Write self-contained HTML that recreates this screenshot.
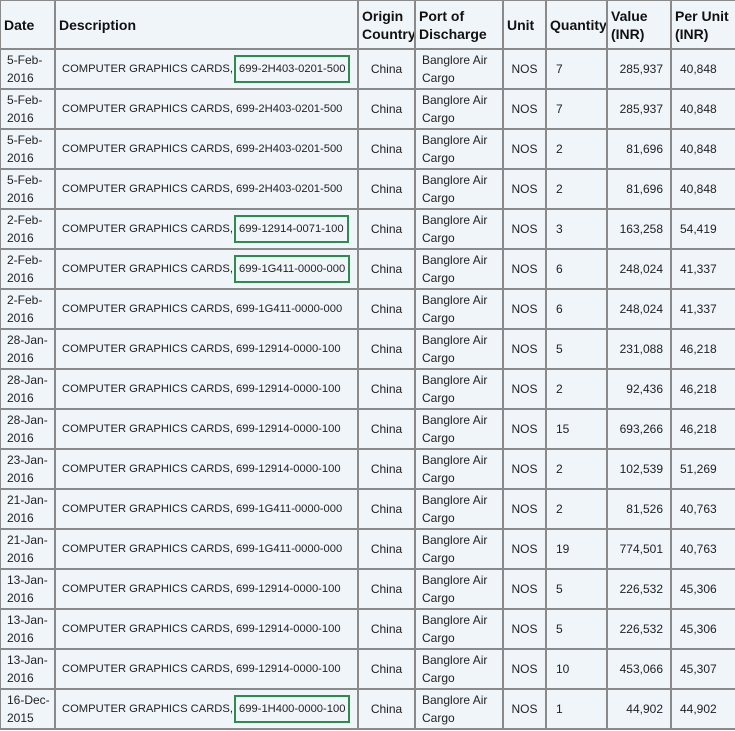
<!DOCTYPE html>
<html><head><meta charset="utf-8"><style>
body{margin:0;background:#fff;font-family:"Liberation Sans",sans-serif;}
table{border-collapse:collapse;table-layout:fixed;width:736px;margin:-1px 0 0 -1px;}
td,th{border:2px solid #8a8a8a;background:#f0f5fa;font-size:12px;color:#222;height:38px;padding:0 6px;line-height:18px;vertical-align:middle;text-align:left;font-weight:normal;overflow:hidden;white-space:nowrap}
th{font-weight:bold;font-size:14px;height:47px;color:#111;padding:0 3px}
td.d{padding:0 6px}
td.desc{padding-left:6px;font-size:11.2px;overflow:visible}
td.c{text-align:center}
td.r{text-align:right;padding-right:7px}
td.q{padding-left:9px}
td.p{padding-left:8px}
td.port{padding-left:6px}
.g{border:2px solid #2e8b4e;padding:6px 3px;margin-left:-2px}
</style></head><body>
<table>
<colgroup><col style="width:55px"><col style="width:303px"><col style="width:57px"><col style="width:88px"><col style="width:43px"><col style="width:61px"><col style="width:64px"><col style="width:65px"></colgroup>
<tr><th>Date</th><th>Description</th><th>Origin<br>Country</th><th>Port of<br>Discharge</th><th>Unit</th><th>Quantity</th><th>Value<br>(INR)</th><th>Per Unit<br>(INR)</th></tr>
<tr><td class="d">5-Feb-<br>2016</td><td class="desc">COMPUTER GRAPHICS CARDS, <span class="g">699-2H403-0201-500</span></td><td class="c">China</td><td class="port">Banglore Air<br>Cargo</td><td class="c">NOS</td><td class="q">7</td><td class="r">285,937</td><td class="p">40,848</td></tr>
<tr><td class="d">5-Feb-<br>2016</td><td class="desc">COMPUTER GRAPHICS CARDS, 699-2H403-0201-500</td><td class="c">China</td><td class="port">Banglore Air<br>Cargo</td><td class="c">NOS</td><td class="q">7</td><td class="r">285,937</td><td class="p">40,848</td></tr>
<tr><td class="d">5-Feb-<br>2016</td><td class="desc">COMPUTER GRAPHICS CARDS, 699-2H403-0201-500</td><td class="c">China</td><td class="port">Banglore Air<br>Cargo</td><td class="c">NOS</td><td class="q">2</td><td class="r">81,696</td><td class="p">40,848</td></tr>
<tr><td class="d">5-Feb-<br>2016</td><td class="desc">COMPUTER GRAPHICS CARDS, 699-2H403-0201-500</td><td class="c">China</td><td class="port">Banglore Air<br>Cargo</td><td class="c">NOS</td><td class="q">2</td><td class="r">81,696</td><td class="p">40,848</td></tr>
<tr><td class="d">2-Feb-<br>2016</td><td class="desc">COMPUTER GRAPHICS CARDS, <span class="g">699-12914-0071-100</span></td><td class="c">China</td><td class="port">Banglore Air<br>Cargo</td><td class="c">NOS</td><td class="q">3</td><td class="r">163,258</td><td class="p">54,419</td></tr>
<tr><td class="d">2-Feb-<br>2016</td><td class="desc">COMPUTER GRAPHICS CARDS, <span class="g">699-1G411-0000-000</span></td><td class="c">China</td><td class="port">Banglore Air<br>Cargo</td><td class="c">NOS</td><td class="q">6</td><td class="r">248,024</td><td class="p">41,337</td></tr>
<tr><td class="d">2-Feb-<br>2016</td><td class="desc">COMPUTER GRAPHICS CARDS, 699-1G411-0000-000</td><td class="c">China</td><td class="port">Banglore Air<br>Cargo</td><td class="c">NOS</td><td class="q">6</td><td class="r">248,024</td><td class="p">41,337</td></tr>
<tr><td class="d">28-Jan-<br>2016</td><td class="desc">COMPUTER GRAPHICS CARDS, 699-12914-0000-100</td><td class="c">China</td><td class="port">Banglore Air<br>Cargo</td><td class="c">NOS</td><td class="q">5</td><td class="r">231,088</td><td class="p">46,218</td></tr>
<tr><td class="d">28-Jan-<br>2016</td><td class="desc">COMPUTER GRAPHICS CARDS, 699-12914-0000-100</td><td class="c">China</td><td class="port">Banglore Air<br>Cargo</td><td class="c">NOS</td><td class="q">2</td><td class="r">92,436</td><td class="p">46,218</td></tr>
<tr><td class="d">28-Jan-<br>2016</td><td class="desc">COMPUTER GRAPHICS CARDS, 699-12914-0000-100</td><td class="c">China</td><td class="port">Banglore Air<br>Cargo</td><td class="c">NOS</td><td class="q">15</td><td class="r">693,266</td><td class="p">46,218</td></tr>
<tr><td class="d">23-Jan-<br>2016</td><td class="desc">COMPUTER GRAPHICS CARDS, 699-12914-0000-100</td><td class="c">China</td><td class="port">Banglore Air<br>Cargo</td><td class="c">NOS</td><td class="q">2</td><td class="r">102,539</td><td class="p">51,269</td></tr>
<tr><td class="d">21-Jan-<br>2016</td><td class="desc">COMPUTER GRAPHICS CARDS, 699-1G411-0000-000</td><td class="c">China</td><td class="port">Banglore Air<br>Cargo</td><td class="c">NOS</td><td class="q">2</td><td class="r">81,526</td><td class="p">40,763</td></tr>
<tr><td class="d">21-Jan-<br>2016</td><td class="desc">COMPUTER GRAPHICS CARDS, 699-1G411-0000-000</td><td class="c">China</td><td class="port">Banglore Air<br>Cargo</td><td class="c">NOS</td><td class="q">19</td><td class="r">774,501</td><td class="p">40,763</td></tr>
<tr><td class="d">13-Jan-<br>2016</td><td class="desc">COMPUTER GRAPHICS CARDS, 699-12914-0000-100</td><td class="c">China</td><td class="port">Banglore Air<br>Cargo</td><td class="c">NOS</td><td class="q">5</td><td class="r">226,532</td><td class="p">45,306</td></tr>
<tr><td class="d">13-Jan-<br>2016</td><td class="desc">COMPUTER GRAPHICS CARDS, 699-12914-0000-100</td><td class="c">China</td><td class="port">Banglore Air<br>Cargo</td><td class="c">NOS</td><td class="q">5</td><td class="r">226,532</td><td class="p">45,306</td></tr>
<tr><td class="d">13-Jan-<br>2016</td><td class="desc">COMPUTER GRAPHICS CARDS, 699-12914-0000-100</td><td class="c">China</td><td class="port">Banglore Air<br>Cargo</td><td class="c">NOS</td><td class="q">10</td><td class="r">453,066</td><td class="p">45,307</td></tr>
<tr><td class="d">16-Dec-<br>2015</td><td class="desc">COMPUTER GRAPHICS CARDS, <span class="g">699-1H400-0000-100</span></td><td class="c">China</td><td class="port">Banglore Air<br>Cargo</td><td class="c">NOS</td><td class="q">1</td><td class="r">44,902</td><td class="p">44,902</td></tr>
</table>
</body></html>
